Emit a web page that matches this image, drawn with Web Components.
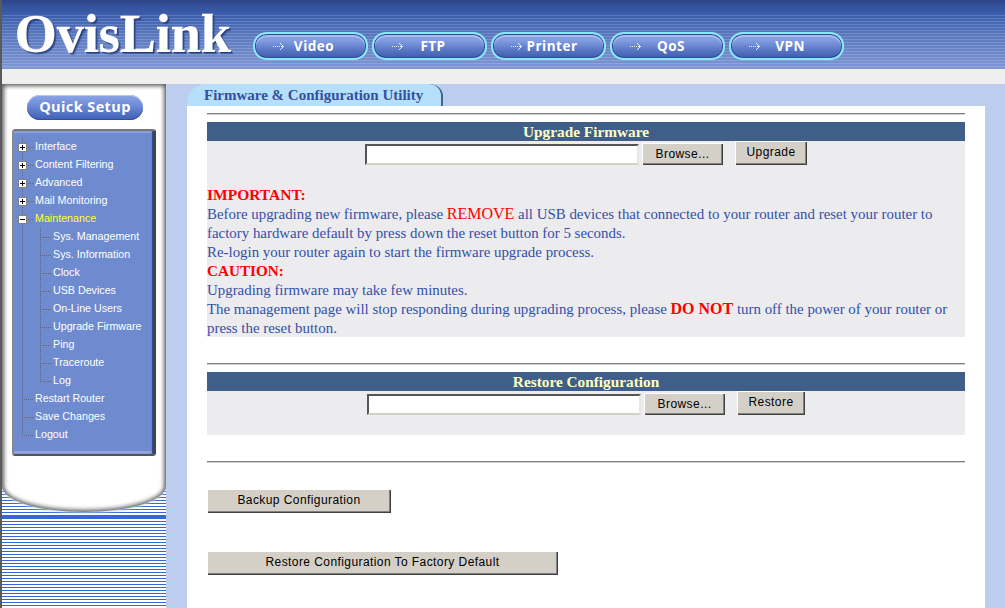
<!DOCTYPE html>
<html>
<head>
<meta charset="utf-8">
<title>OvisLink</title>
<style>
  html, body { margin: 0; padding: 0; height: 100%; overflow: hidden; background: #fff; }
</style>
</head>
<body>
<ovis-app>
  <ovis-header slot="header">
    <nav-pill>Video</nav-pill>
    <nav-pill>FTP</nav-pill>
    <nav-pill>Printer</nav-pill>
    <nav-pill>QoS</nav-pill>
    <nav-pill>VPN</nav-pill>
  </ovis-header>

  <side-bar slot="side">
    <tree-item toggle="plus">Interface</tree-item>
    <tree-item toggle="plus">Content Filtering</tree-item>
    <tree-item toggle="plus">Advanced</tree-item>
    <tree-item toggle="plus">Mail Monitoring</tree-item>
    <tree-item toggle="minus" active>Maintenance</tree-item>
    <tree-item sub>Sys. Management</tree-item>
    <tree-item sub>Sys. Information</tree-item>
    <tree-item sub>Clock</tree-item>
    <tree-item sub>USB Devices</tree-item>
    <tree-item sub>On-Line Users</tree-item>
    <tree-item sub>Upgrade Firmware</tree-item>
    <tree-item sub>Ping</tree-item>
    <tree-item sub>Traceroute</tree-item>
    <tree-item sub last>Log</tree-item>
    <tree-item>Restart Router</tree-item>
    <tree-item>Save Changes</tree-item>
    <tree-item last>Logout</tree-item>
  </side-bar>

  <tab-panel title="Firmware &amp; Configuration Utility">
    <rule-line></rule-line>
    <config-section heading="Upgrade Firmware" action="Upgrade" action-width="72" input-width="274" browse-width="81">
      <p><big-red bold style="font-size:15.5px">IMPORTANT:</big-red><br>
      Before upgrading new firmware, please <big-red>REMOVE</big-red> all USB devices that connected to your router and reset your router to factory hardware default by press down the reset button for 5 seconds.<br>
      Re-login your router again to start the firmware upgrade process.<br>
      <big-red bold style="font-size:15.2px">CAUTION:</big-red><br>
      Upgrading firmware may take few minutes.<br>
      The management page will stop responding during upgrading process, please <big-red bold>DO NOT</big-red> turn off the power of your router or press the reset button.</p>
    </config-section>
    <rule-line class="gap"></rule-line>
    <config-section heading="Restore Configuration" action="Restore" action-width="68" input-width="274" browse-width="81" spaced></config-section>
    <rule-line class="gap"></rule-line>
    <wide-actions>
      <win-button width="184" height="24">Backup Configuration</win-button>
      <win-button width="351" height="24">Restore Configuration To Factory Default</win-button>
    </wide-actions>
  </tab-panel>
</ovis-app>

<script>
const SERIF = '"Liberation Serif", "Times New Roman", serif';
const SANS = '"Liberation Sans", Arial, sans-serif';

class OvisApp extends HTMLElement {
  connectedCallback() {
    this.attachShadow({ mode: 'open' }).innerHTML = `
    <style>
      :host { display: flex; flex-direction: column; height: 608px; width: 1005px; box-sizing: border-box; border-left: 2px solid #5a5a5a; overflow: hidden; }
      .strip { height: 15px; background: #efefef; flex: none; }
      .row { display: flex; flex: 1; min-height: 0; }
      main { flex: 1; min-width: 0; background: #bccdee; padding-right: 20px; padding-left: 21px; }
    </style>
    <slot name="header"></slot>
    <div class="strip"></div>
    <div class="row">
      <slot name="side"></slot>
      <main><slot></slot></main>
    </div>`;
  }
}

class OvisHeader extends HTMLElement {
  connectedCallback() {
    this.attachShadow({ mode: 'open' }).innerHTML = `
    <style>
      :host {
        display: flex; height: 69px; flex: none; box-sizing: border-box; padding: 0 0 0 14px;
        background:
          linear-gradient(to bottom, #2c4488 0, #33529c 6px, #3a5cab 14px) no-repeat 0 0 / 100% 14px,
          repeating-linear-gradient(to bottom, rgba(255,255,255,.16) 0 1px, transparent 1px 3px),
          linear-gradient(to bottom, #3a5cab 14px, #5b79c0 36px, #7f97d4 69px);
      }
      .logo {
        font: bold 54px/50px ${SERIF}; color: #fff; width: 238px; margin-top: 9px; margin-left: -1px;
        -webkit-text-stroke: .7px #fff; paint-order: stroke fill;
        text-shadow: 1px 1px 0 #28407f, 2px 2px 1px rgba(30,50,110,.55); white-space: nowrap;
      }
      .pills { display: flex; gap: 4px; margin-top: 32px; height: 28px; }
    </style>
    <div class="logo">OvisLink</div>
    <div class="pills"><slot></slot></div>`;
  }
}

class NavPill extends HTMLElement {
  connectedCallback() {
    this.attachShadow({ mode: 'open' }).innerHTML = `
    <style>
      :host {
        display: flex; align-items: center; width: 115px; height: 28px; box-sizing: border-box;
        border-radius: 14px / 13px; border: 2px solid #8be8f8;
        box-shadow: inset 0 0 0 1px #2f4a96, inset 0 2px 0 1px #a9bdf0;
        background: linear-gradient(to bottom, #8fa7e8 0, #7f9ae0 30%, #5f7dc9 60%, #3f5cae 100%);
        padding-left: 18px; color: #fff;
        font: 700 13.5px/24px "Open Sans", sans-serif;
      }
      svg { flex: none; width: 13px; height: 9px; opacity: .85; }
      .label { flex: 1; text-align: center; padding-right: 24px; letter-spacing: .5px; }
    </style>
    <svg viewBox="0 0 13 9"><g fill="#fff">
      <rect x="0" y="4" width="1" height="1"/><rect x="2" y="4" width="1" height="1"/><rect x="4" y="4" width="1" height="1"/><rect x="6" y="4" width="1" height="1"/>
      <rect x="8" y="4" width="2" height="1"/><rect x="7" y="1" width="1" height="1"/><rect x="8" y="2" width="1" height="1"/>
      <rect x="9" y="3" width="1" height="1"/><rect x="10" y="4" width="1" height="1"/><rect x="9" y="5" width="1" height="1"/>
      <rect x="8" y="6" width="1" height="1"/><rect x="7" y="7" width="1" height="1"/></g></svg>
    <span class="label"><slot></slot></span>`;
  }
}

class SideBar extends HTMLElement {
  connectedCallback() {
    this.attachShadow({ mode: 'open' }).innerHTML = `
    <style>
      :host {
        display: block; width: 164px; flex: none; height: 100%;
        background:
          linear-gradient(#3567d6, #3567d6) no-repeat 0 432px / 100% 2px,
          repeating-linear-gradient(to bottom, #fff 0 2px, #3567d6 2px 3px);
      }
      .panel {
        box-sizing: border-box; height: 428px; background: #fff; padding: 11px 10px 0;
        border-radius: 0 0 82px 82px / 0 0 26px 26px;
        box-shadow: inset 0 0 4px 2px #5c5c5c, 0 1px 3px rgba(190,205,240,.9);
      }
      .quick {
        width: 116px; height: 25px; margin: 0 0 9px 15px; border-radius: 13px; color: #fff; text-align: center;
        background: linear-gradient(to bottom, #8da5e6 0, #6f8cd8 40%, #3f5fb6 100%);
        box-shadow: inset 0 -1px 0 #345098, inset 0 1px 0 #b5c7f3;
        font: 700 14.5px/24px "Open Sans", sans-serif; letter-spacing: .4px;
      }
      .menu {
        box-sizing: border-box; width: 144px; height: 327px; padding-top: 6px; border-radius: 3px;
        background: #6e8bcf;
        border: 2px solid; border-color: #777 #444 #555 #888;
        box-shadow: inset -2px 0 1px #2c4585, inset 0 2px 1px #8fa6e0, inset 0 -3px 1px #8fa6e0;
      }
    </style>
    <div class="panel">
      <div class="quick">Quick Setup</div>
      <div class="menu"><slot></slot></div>
    </div>`;
  }
}

class TreeItem extends HTMLElement {
  connectedCallback() {
    const toggle = this.getAttribute('toggle');
    const mark = toggle === 'plus' ? '<path d="M2 4.5h5M4.5 2v5" stroke="#000" fill="none"/>'
      : toggle === 'minus' ? '<path d="M2 4.5h5" stroke="#000" fill="none"/>' : '';
    const box = toggle
      ? `<svg viewBox="0 0 9 9" width="9" height="9"><rect x=".5" y=".5" width="8" height="8" fill="#fff" stroke="#808080"/>${mark}</svg>`
      : '';
    this.attachShadow({ mode: 'open' }).innerHTML = `
    <style>
      :host {
        --dot: repeating-linear-gradient(to bottom, #5f6478 0 1px, transparent 1px 2px);
        --dash: repeating-linear-gradient(to right, #5f6478 0 1px, transparent 1px 2px);
        display: flex; align-items: center; position: relative; height: 18px; box-sizing: border-box;
        padding-left: 21px; color: #fff; font: 10.7px/18px ${SANS}; white-space: nowrap;
        background-image: var(--dot), var(--dash);
        background-repeat: no-repeat;
        background-size: 1px 100%, 12px 1px;
        background-position: 8px 0, 8px 10px;
      }
      :host([sub]) {
        padding-left: 39px;
        background-image: var(--dot), var(--dot), var(--dash);
        background-size: 1px 100%, 1px 100%, 12px 1px;
        background-position: 8px 0, 26px 0, 26px 10px;
      }
      :host([sub][last]) { background-size: 1px 100%, 1px 10px, 12px 1px; }
      :host(:not([sub])[last]) { background-size: 1px 10px, 12px 1px; }
      :host([active]) { color: #ffff33; }
      svg { position: absolute; left: 4px; top: 6px; }
    </style>
    ${box}<slot></slot>`;
  }
}

class TabPanel extends HTMLElement {
  connectedCallback() {
    this.attachShadow({ mode: 'open' }).innerHTML = `
    <style>
      :host { display: block; }
      .tab {
        box-sizing: border-box; width: 256px; height: 22px; padding-left: 17px;
        background: #b5dffb; color: #34509f; border-radius: 20px 14px 0 0 / 18px 12px 0 0;
        border-right: 2px solid #3c6a88;
        font: bold 15px/23px ${SERIF}; white-space: nowrap;
      }
      .body { background: #fff; padding: 7px 20px 0; height: 502px; }
    </style>
    <div class="tab">${this.getAttribute('title').replace('&', '&amp;')}</div>
    <div class="body"><slot></slot></div>`;
    this.removeAttribute('title');
  }
}

class RuleLine extends HTMLElement {
  connectedCallback() {
    this.attachShadow({ mode: 'open' }).innerHTML = `
    <style>
      :host { display: block; height: 2px; background: linear-gradient(to bottom, #808080 50%, #d4d0c8 50%); margin-bottom: 7px; }
      :host(.gap) { margin-top: 26px; }
    </style>`;
  }
}

class ConfigSection extends HTMLElement {
  connectedCallback() {
    const inputW = this.getAttribute('input-width');
    const browseW = this.getAttribute('browse-width');
    const actionW = this.getAttribute('action-width');
    this.attachShadow({ mode: 'open' }).innerHTML = `
    <style>
      :host { display: block; background: #ecebee; color: #3350a8; font: 14.9px/19px ${SERIF}; }
      :host([spaced]) { padding-bottom: 20px; }
      h2 {
        margin: 0; height: 19px; background: #3f5e88; color: #ffffc4; text-align: center;
        font: bold 15.3px/20px ${SERIF};
      }
      .file { display: flex; justify-content: center; align-items: flex-end; height: 24px; }
      input {
        box-sizing: border-box; width: ${inputW}px; height: 21px; margin: 0 3px 0 0; padding: 0; background: #fff;
        border: 2px solid; border-color: #555 #e8e6e0 #d4d0c8 #555; border-radius: 0; outline: 0;
      }
      win-button { margin-left: 12px; }
      .browse { margin-left: 0; }
      ::slotted(p) { margin: 21px 0 0; height: 151px; }
    </style>
    <h2>${this.getAttribute('heading')}</h2>
    <div class="file">
      <input type="text" aria-label="file">
      <win-button class="browse" width="${browseW}" height="22">Browse...</win-button>
      <win-button width="${actionW}" height="24">${this.getAttribute('action')}</win-button>
    </div>
    <slot></slot>`;
  }
}

class BigRed extends HTMLElement {
  connectedCallback() {
    this.attachShadow({ mode: 'open' }).innerHTML = `
    <style>
      :host { display: inline; color: #f00; font-size: 16px; line-height: 1; }
      :host([bold]) { font-weight: bold; }
    </style><slot></slot>`;
  }
}

class WinButton extends HTMLElement {
  connectedCallback() {
    this.attachShadow({ mode: 'open' }).innerHTML = `
    <style>
      :host { display: block; flex: none; }
      :host(.browse) button { padding-bottom: 1px; }
      button {
        display: block; box-sizing: border-box; width: ${this.getAttribute('width')}px; height: ${this.getAttribute('height')}px;
        margin: 0; padding: 0 0 3px; background: #d4d0c8; color: #000; border: 0; border-radius: 0;
        box-shadow: inset 1px 1px 0 #fff, inset -1px -1px 0 #404040, inset -2px -2px 0 #808080;
        font: 12px/16px ${SANS}; letter-spacing: .42px;
      }
    </style>
    <button type="button"><slot></slot></button>`;
  }
}

class WideActions extends HTMLElement {
  connectedCallback() {
    this.attachShadow({ mode: 'open' }).innerHTML = `
    <style>
      :host { display: flex; flex-direction: column; align-items: flex-start; gap: 38px; margin-top: 26px; }
    </style>
    <slot></slot>`;
  }
}

customElements.define('ovis-app', OvisApp);
customElements.define('ovis-header', OvisHeader);
customElements.define('nav-pill', NavPill);
customElements.define('side-bar', SideBar);
customElements.define('tree-item', TreeItem);
customElements.define('tab-panel', TabPanel);
customElements.define('rule-line', RuleLine);
customElements.define('config-section', ConfigSection);
customElements.define('big-red', BigRed);
customElements.define('win-button', WinButton);
customElements.define('wide-actions', WideActions);
</script>
</body>
</html>
